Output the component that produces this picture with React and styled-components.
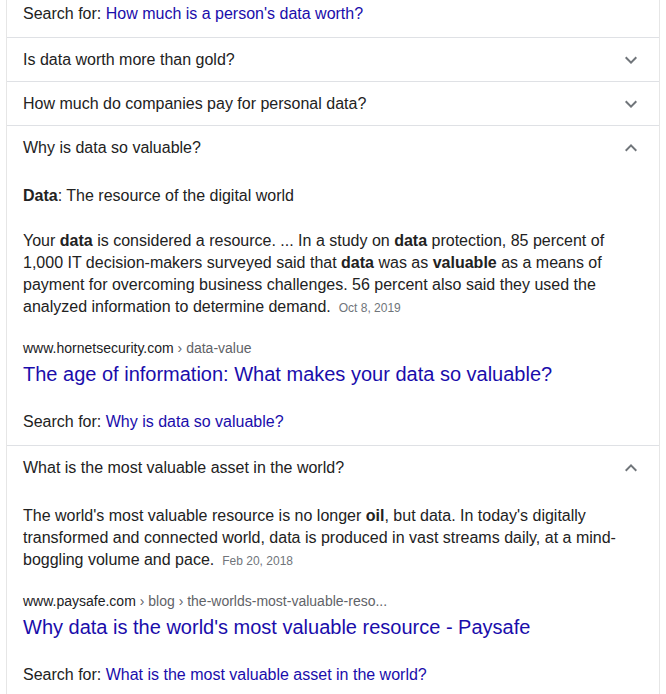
import styled, { createGlobalStyle } from "styled-components";

const GlobalStyle = createGlobalStyle`
  body {
    margin: 0;
    background: #fff;
    font-family: "Liberation Sans", Arial, sans-serif;
    color: #222;
  }
`;

const Panel = styled.div`
  margin-left: 6px;
  width: 652px;
  min-height: 694px;
  border-left: 1px solid #e6e6e6;
  border-right: 1px solid #e6e6e6;
`;

const Block = styled.div`
  border-bottom: 1px solid #dfe1e5;
  padding: 0 16px;
`;

const Question = styled.div`
  height: 43px;
  display: flex;
  align-items: center;
  justify-content: space-between;
  font-size: 16px;
  line-height: 22px;
  color: #222;
`;

const Chevron = styled.svg`
  width: 24px;
  height: 24px;
  flex-shrink: 0;
  fill: #70757a;
  transform: ${(p) => (p.$open ? "rotate(180deg)" : "none")};
`;

const Answer = styled.div`
  padding-top: 16px;
`;

const Heading = styled.div`
  font-size: 16px;
  line-height: 22px;
  margin-bottom: 23px;
`;

const Para = styled.div`
  font-size: 16px;
  line-height: 22px;
  color: #222;
  b {
    font-weight: bold;
  }
`;

const DateText = styled.span`
  font-size: 12px;
  color: #70757a;
  margin-left: 8px;
`;

const Cite = styled.div`
  margin-top: 19px;
  font-size: 14px;
  line-height: 20px;
  color: #202124;
  span {
    color: #5f6368;
  }
`;

const Title = styled.a`
  display: block;
  margin-top: 3px;
  font-size: 20px;
  line-height: 26px;
  color: #1a0dab;
  text-decoration: none;
`;

const SearchFor = styled.div`
  padding: ${(p) => (p.$first ? "3px" : "24px")} 0 12px;
  font-size: 16px;
  line-height: 22px;
  color: #222;
  a {
    color: #1a0dab;
    text-decoration: none;
  }
`;

const Arrow = ({ open }) => (
  <Chevron viewBox="0 0 24 24" $open={open}>
    <path d="M16.59 8.59L12 13.17 7.41 8.59 6 10l6 6 6-6z" />
  </Chevron>
);

const App = () => {
  return (
    <>
      <GlobalStyle />
      <Panel>
        <Block>
          <SearchFor $first>
            Search for: <a href="#">How much is a person's data worth?</a>
          </SearchFor>
        </Block>
        <Block>
          <Question>
            Is data worth more than gold?
            <Arrow />
          </Question>
        </Block>
        <Block>
          <Question>
            How much do companies pay for personal data?
            <Arrow />
          </Question>
        </Block>
        <Block>
          <Question>
            Why is data so valuable?
            <Arrow open />
          </Question>
          <Answer>
            <Heading>
              <b>Data</b>: The resource of the digital world
            </Heading>
            <Para>
              Your <b>data</b> is considered a resource. ... In a study on <b>data</b> protection, 85 percent of 1,000 IT
              decision-makers surveyed said that <b>data</b> was as <b>valuable</b> as a means of payment for overcoming
              business challenges. 56 percent also said they used the analyzed information to determine demand.
              <DateText>Oct 8, 2019</DateText>
            </Para>
            <Cite>
              www.hornetsecurity.com<span> › data-value</span>
            </Cite>
            <Title href="#">The age of information: What makes your data so valuable?</Title>
            <SearchFor>
              Search for: <a href="#">Why is data so valuable?</a>
            </SearchFor>
          </Answer>
        </Block>
        <Block>
          <Question>
            What is the most valuable asset in the world?
            <Arrow open />
          </Question>
          <Answer>
            <Para>
              The world's most valuable resource is no longer <b>oil</b>, but data. In today's digitally transformed and
              connected world, data is produced in vast streams daily, at a mind-boggling volume and pace.
              <DateText>Feb 20, 2018</DateText>
            </Para>
            <Cite>
              www.paysafe.com<span> › blog › the-worlds-most-valuable-reso...</span>
            </Cite>
            <Title href="#">Why data is the world's most valuable resource - Paysafe</Title>
            <SearchFor>
              Search for: <a href="#">What is the most valuable asset in the world?</a>
            </SearchFor>
          </Answer>
        </Block>
      </Panel>
    </>
  );
};

export default App;
